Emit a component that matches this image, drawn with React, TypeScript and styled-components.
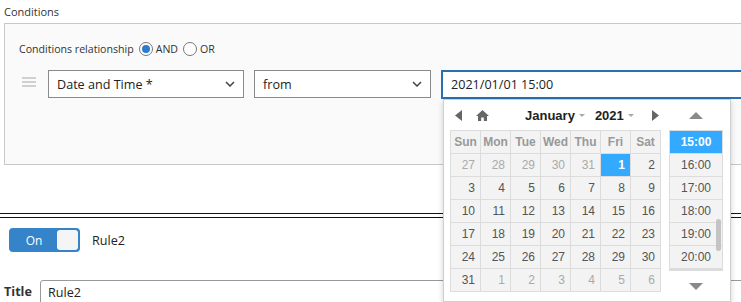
import React from "react";
import styled, { createGlobalStyle } from "styled-components";

const Global = createGlobalStyle`
  html, body { margin: 0; padding: 0; background: #fff; overflow: hidden; }
  body { font-family: "Open Sans", "Noto Sans", sans-serif; color: #222; }
  * { box-sizing: border-box; }
`;

const Page = styled.div`
  width: 900px;
  padding-left: 4px;
  padding-top: 4px;
`;

const SectionLabel = styled.div`
  font-size: 11px;
  line-height: 16px;
  color: #333;
  margin-bottom: 3px;
`;

const Panel = styled.div`
  height: 142px;
  background: #fafafa;
  border: 1px solid #c8c8c8;
  padding: 16px 0 0 14px;
`;

const RelationRow = styled.div`
  display: flex;
  align-items: center;
  height: 18px;
  font-size: 10.6px;
  color: #333;
  gap: 3px;
`;

const RadioCircle = styled.span<{ $checked?: boolean }>`
  width: 14px;
  height: 14px;
  border-radius: 50%;
  border: 1px solid #777;
  background: #fff;
  display: inline-flex;
  align-items: center;
  justify-content: center;
  margin-left: 2px;
  &::after {
    content: "";
    width: 8px;
    height: 8px;
    border-radius: 50%;
    background: ${(p) => (p.$checked ? "#2b7bd0" : "transparent")};
  }
`;

const ConditionRow = styled.div`
  display: flex;
  align-items: flex-start;
  margin-top: 12px;
`;

const DragHandle = styled.div`
  width: 14px;
  margin: 7px 12px 0 3px;
  display: flex;
  flex-direction: column;
  gap: 2px;
  span {
    display: block;
    height: 2px;
    background: #d0d0d0;
  }
`;

const Select = styled.div<{ $w: number; $mr: number }>`
  width: ${(p) => p.$w}px;
  margin-right: ${(p) => p.$mr}px;
  height: 28px;
  border: 1px solid #8a8a8a;
  background: #fff;
  display: flex;
  align-items: center;
  justify-content: space-between;
  padding: 0 8px 0 8px;
  font-size: 12.6px;
  color: #222;
`;

const PickerWrap = styled.div`
  position: relative;
  flex: 1;
`;

const DateInput = styled.div`
  height: 29px;
  border: 2px solid #2a6fb0;
  background: #fff;
  display: flex;
  align-items: center;
  padding-left: 8px;
  font-size: 12.6px;
  color: #222;
`;

const Popup = styled.div`
  position: absolute;
  left: 2px;
  top: 29px;
  width: 288px;
  height: 203px;
  background: #fff;
  border: 1px solid #cfcfcf;
  box-shadow: 0 2px 6px rgba(0, 0, 0, 0.18);
  padding: 0 0 0 6px;
  display: flex;
  gap: 8px;
  font-family: "Liberation Sans", Arial, sans-serif;
  z-index: 5;
`;

const CalColumn = styled.div`
  width: 211px;
  display: flex;
  flex-direction: column;
`;

const NavRow = styled.div`
  height: 30px;
  display: flex;
  align-items: center;
`;

const Caret = styled.span`
  display: inline-block;
  width: 0;
  height: 0;
  border-left: 3px solid transparent;
  border-right: 3px solid transparent;
  border-top: 3px solid #aaa;
  margin-left: 4px;
  vertical-align: middle;
`;

const NavTitle = styled.span<{ $ml: number }>`
  font-size: 13px;
  font-weight: bold;
  color: #222;
  margin-left: ${(p) => p.$ml}px;
  display: inline-flex;
  align-items: center;
`;

const Grid = styled.div`
  display: grid;
  grid-template-columns: repeat(7, 30px);
  grid-auto-rows: 23px;
  border-left: 1px solid #dcdcdc;
  border-top: 1px solid #dcdcdc;
`;

const Cell = styled.div<{ $head?: boolean; $other?: boolean; $sel?: boolean }>`
  border-right: 1px solid #dcdcdc;
  border-bottom: 1px solid #dcdcdc;
  background: ${(p) => (p.$sel ? "#33aaff" : "#f3f3f3")};
  font-size: 12px;
  font-weight: ${(p) => (p.$head || p.$sel ? "bold" : "normal")};
  color: ${(p) => (p.$sel ? "#fff" : p.$head ? "#999" : p.$other ? "#aaa" : "#555")};
  display: flex;
  align-items: center;
  justify-content: ${(p) => (p.$head ? "center" : "flex-end")};
  padding-right: ${(p) => (p.$head ? 0 : 5)}px;
`;

const TimeColumn = styled.div`
  width: 54px;
  display: flex;
  flex-direction: column;
  align-items: center;
`;

const ArrowBox = styled.div`
  height: 30px;
  display: flex;
  align-items: center;
  justify-content: center;
`;

const TimeList = styled.div`
  position: relative;
  width: 54px;
  border: 1px solid #dcdcdc;
  border-bottom-width: 2px;
`;

const TimeItem = styled.div<{ $sel?: boolean }>`
  height: 23px;
  border-bottom: 1px solid #dcdcdc;
  background: ${(p) => (p.$sel ? "#33aaff" : "#f3f3f3")};
  color: ${(p) => (p.$sel ? "#fff" : "#555")};
  font-weight: ${(p) => (p.$sel ? "bold" : "normal")};
  font-size: 12px;
  display: flex;
  align-items: center;
  justify-content: center;
  &:last-child { border-bottom: none; }
`;

const Thumb = styled.div`
  position: absolute;
  right: 1px;
  top: 88px;
  width: 5px;
  height: 32px;
  border-radius: 3px;
  background: #c4c4c4;
`;

const Separator = styled.div`
  margin: 48px 0 0 -4px;
  height: 5px;
  border-top: 1px solid #111;
  border-bottom: 1px solid #111;
`;

const RuleRow = styled.div`
  display: flex;
  align-items: center;
  margin: 10px 0 0 5px;
  gap: 12px;
`;

const Toggle = styled.div`
  width: 71px;
  height: 24px;
  border-radius: 4px;
  background: #3583c9;
  display: flex;
  align-items: center;
  padding: 2px;
`;

const ToggleText = styled.span`
  flex: 1;
  text-align: center;
  color: #fff;
  font-size: 12px;
`;

const Knob = styled.span`
  width: 21px;
  height: 20px;
  border-radius: 3px;
  background: #f5f5f5;
`;

const RuleName = styled.span`
  font-size: 12.6px;
  color: #222;
`;

const TitleRow = styled.div`
  display: flex;
  align-items: flex-start;
  margin-top: 28px;
`;

const TitleLabel = styled.span`
  font-size: 12.6px;
  font-weight: bold;
  color: #333;
  width: 36px;
  padding-top: 3px;
`;

const TitleInput = styled.div`
  width: 760px;
  height: 30px;
  border: 1px solid #999;
  border-radius: 3px;
  padding: 4px 0 0 7px;
  font-size: 12.6px;
  line-height: 16px;
  color: #222;
`;

const Chevron = () => (
  <svg width="10" height="6" viewBox="0 0 10 6">
    <path d="M1 1l4 4 4-4" fill="none" stroke="#444" strokeWidth="1.5" />
  </svg>
);

const Tri = ({ dir, color = "#666", w = 7, h = 11 }: { dir: "l" | "r" | "u" | "d"; color?: string; w?: number; h?: number }) => {
  const d =
    dir === "l" ? `M${w} 0L0 ${h / 2}L${w} ${h}Z` :
    dir === "r" ? `M0 0L${w} ${h / 2}L0 ${h}Z` :
    dir === "u" ? `M0 ${h}L${w / 2} 0L${w} ${h}Z` :
    `M0 0L${w / 2} ${h}L${w} 0Z`;
  return (
    <svg width={w} height={h} viewBox={`0 0 ${w} ${h}`}>
      <path d={d} fill={color} />
    </svg>
  );
};

const Home = () => (
  <svg width="13" height="11" viewBox="0 0 13 11">
    <path d="M6.5 0L0 6h2v5h3.2V7.5h2.6V11H11V6h2z" fill="#666" />
  </svg>
);

const heads = ["Sun", "Mon", "Tue", "Wed", "Thu", "Fri", "Sat"];
const days: { n: number; other?: boolean }[] = [
  ...[27, 28, 29, 30, 31].map((n) => ({ n, other: true })),
  ...Array.from({ length: 31 }, (_, i) => ({ n: i + 1 })),
  ...[1, 2, 3, 4, 5, 6].map((n) => ({ n, other: true })),
];
const times = ["15:00", "16:00", "17:00", "18:00", "19:00", "20:00"];

export default function App() {
  return (
    <>
      <Global />
      <Page>
        <SectionLabel>Conditions</SectionLabel>
        <Panel>
          <RelationRow>
            Conditions relationship
            <RadioCircle $checked /> AND
            <RadioCircle /> OR
          </RelationRow>
          <ConditionRow>
            <DragHandle>
              <span />
              <span />
              <span />
            </DragHandle>
            <Select $w={196} $mr={10}>
              Date and Time *
              <Chevron />
            </Select>
            <Select $w={177} $mr={10}>
              from
              <Chevron />
            </Select>
            <PickerWrap>
              <DateInput>2021/01/01 15:00</DateInput>
              <Popup>
                <CalColumn>
                  <NavRow>
                    <span style={{ marginLeft: 5, display: "flex" }}>
                      <Tri dir="l" />
                    </span>
                    <span style={{ marginLeft: 14, display: "flex" }}>
                      <Home />
                    </span>
                    <NavTitle $ml={36}>
                      January
                      <Caret />
                    </NavTitle>
                    <NavTitle $ml={10}>
                      2021
                      <Caret />
                    </NavTitle>
                    <span style={{ marginLeft: 18, display: "flex" }}>
                      <Tri dir="r" />
                    </span>
                  </NavRow>
                  <Grid>
                    {heads.map((h) => (
                      <Cell key={h} $head>
                        {h}
                      </Cell>
                    ))}
                    {days.map((d, i) => (
                      <Cell key={i} $other={d.other} $sel={!d.other && d.n === 1}>
                        {d.n}
                      </Cell>
                    ))}
                  </Grid>
                </CalColumn>
                <TimeColumn>
                  <ArrowBox>
                    <Tri dir="u" color="#8a8a8a" w={14} h={7} />
                  </ArrowBox>
                  <TimeList>
                    {times.map((t, i) => (
                      <TimeItem key={t} $sel={i === 0}>
                        {t}
                      </TimeItem>
                    ))}
                    <Thumb />
                  </TimeList>
                  <ArrowBox>
                    <Tri dir="d" color="#8a8a8a" w={14} h={7} />
                  </ArrowBox>
                </TimeColumn>
              </Popup>
            </PickerWrap>
          </ConditionRow>
        </Panel>
        <Separator />
        <RuleRow>
          <Toggle>
            <ToggleText>On</ToggleText>
            <Knob />
          </Toggle>
          <RuleName>Rule2</RuleName>
        </RuleRow>
        <TitleRow>
          <TitleLabel>Title</TitleLabel>
          <TitleInput>Rule2</TitleInput>
        </TitleRow>
      </Page>
    </>
  );
}
